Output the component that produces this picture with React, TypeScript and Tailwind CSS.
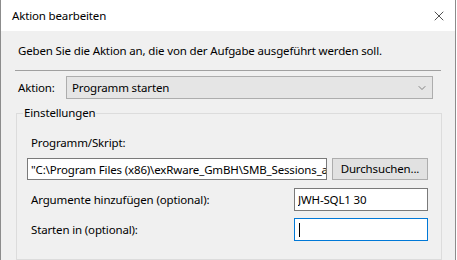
import { ChevronDown, X } from "lucide-react";

const font = { fontFamily: '"Segoe UI", "Noto Sans", "Open Sans", sans-serif' };

export default function App() {
  return (
    <div className="flex h-[260px] w-[457px] overflow-hidden bg-white text-[11.5px] tracking-[-0.15px] text-black" style={font}>
      <div className="flex h-full w-[456px] flex-col border-x border-[#8c8c8c]">
        <div className="flex h-[31px] shrink-0 items-center justify-between bg-white pl-[11px] pr-[8px]">
          <span className="leading-4">Aktion bearbeiten</span>
          <X className="h-[16px] w-[16px] text-[#111]" strokeWidth={1.1} />
        </div>

        <div className="flex flex-1 flex-col bg-[#f0f0f0] px-[14px]">
          <p className="mt-[12px] pl-[3px] leading-4">
            Geben Sie die Aktion an, die von der Aufgabe ausgeführt werden soll.
          </p>
          <div className="mt-[11px] h-px bg-[#a0a0a0]" />

          <div className="mt-[5px] flex items-center pl-[3px]">
            <span className="w-[48px] leading-4">Aktion:</span>
            <div className="flex h-[23px] w-[367px] items-center justify-between border border-[#adadad] bg-[#e5e5e5] pl-[5px] pr-[4px]">
              <span className="leading-4">Programm starten</span>
              <ChevronDown className="h-[12px] w-[12px] text-[#606060]" strokeWidth={1.5} />
            </div>
          </div>

          <div className="relative ml-px mr-[-1px] mt-[14px] flex-1 border border-[#dcdcdc] px-[10px]">
            <span className="absolute -top-[9px] left-[6px] bg-[#f0f0f0] px-[1px] leading-4">Einstellungen</span>

            <p className="mt-[21px] pl-[4px] leading-4">Programm/Skript:</p>
            <div className="mt-[7px] flex items-center">
              <input
                readOnly
                value={'"C:\\Program Files (x86)\\exRware_GmBH\\SMB_Sessions_auswerten.exe"'}
                className="h-[22px] w-[300px] border border-[#7a7a7a] bg-white pl-[3px] outline-none"
              />
              <button className="ml-[5px] flex h-[22px] w-[96px] items-center justify-center border border-[#adadad] bg-[#e1e1e1] leading-4">
                Durchsuchen...
              </button>
            </div>

            <div className="mt-[8px] flex items-center justify-between">
              <span className="pl-[4px] leading-4">Argumente hinzufügen (optional):</span>
              <input
                readOnly
                value="JWH-SQL1 30"
                className="mr-[3px] h-[23px] w-[134px] border border-[#7a7a7a] bg-white pl-[3px] outline-none"
              />
            </div>

            <div className="mt-[7px] flex items-center justify-between">
              <span className="pl-[4px] leading-4">Starten in (optional):</span>
              <div className="mr-[3px] flex h-[23px] w-[134px] items-center border border-[#0078d7] bg-white pl-[4px]">
                <span className="h-[14px] w-px bg-black" />
              </div>
            </div>
          </div>
        </div>
      </div>
    </div>
  );
}
